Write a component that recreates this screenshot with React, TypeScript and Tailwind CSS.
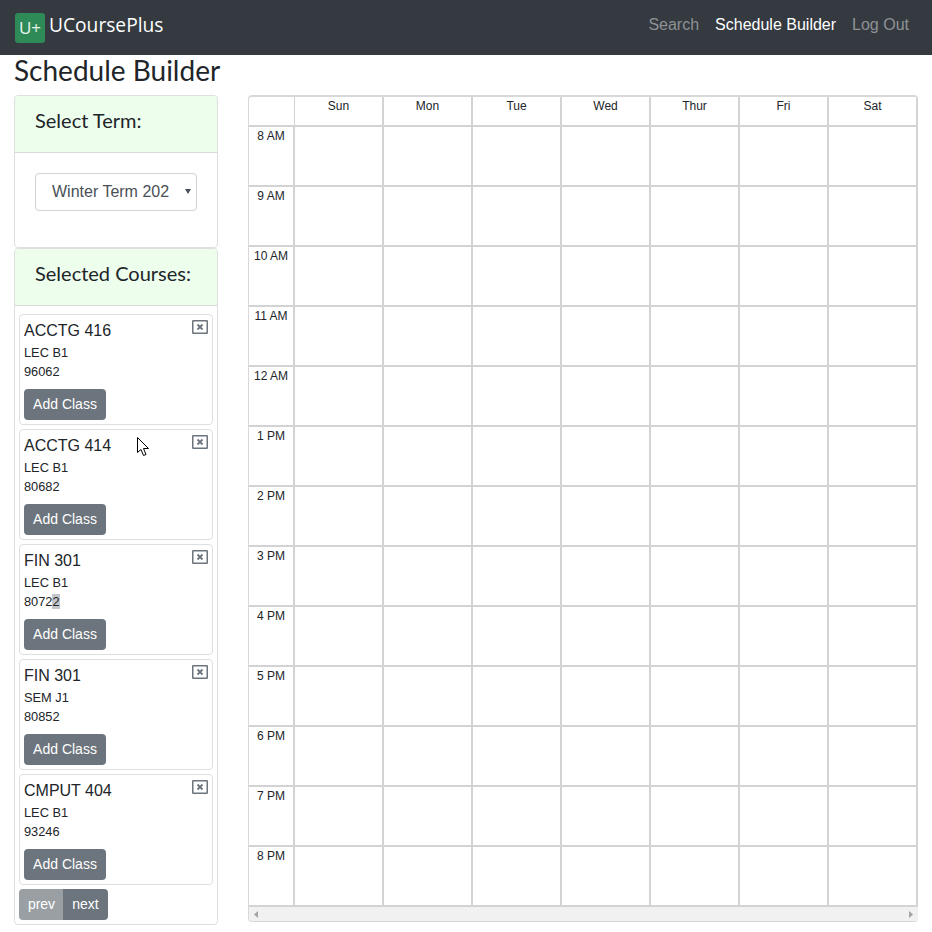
import { Fragment } from 'react'

const courses = [
  { name: 'ACCTG 416', section: 'LEC B1', code: '96062' },
  { name: 'ACCTG 414', section: 'LEC B1', code: '80682' },
  { name: 'FIN 301', section: 'LEC B1', code: '80722' },
  { name: 'FIN 301', section: 'SEM J1', code: '80852' },
  { name: 'CMPUT 404', section: 'LEC B1', code: '93246' },
]

const days = ['Sun', 'Mon', 'Tue', 'Wed', 'Thur', 'Fri', 'Sat']

const hours = [
  '8 AM', '9 AM', '10 AM', '11 AM', '12 AM', '1 PM', '2 PM',
  '3 PM', '4 PM', '5 PM', '6 PM', '7 PM', '8 PM',
]

function CloseIcon() {
  return (
    <svg width="16" height="14" viewBox="0 0 16 14" fill="none" className="block">
      <rect x="0.75" y="0.75" width="14.5" height="12.5" rx="0.5" stroke="#6c757d" strokeWidth="1.5" />
      <path d="M5.5 4.5 L10.5 9.5 M10.5 4.5 L5.5 9.5" stroke="#6c757d" strokeWidth="1.8" />
    </svg>
  )
}

function CourseCard({ name, section, code }: { name: string; section: string; code: string }) {
  // the third card has the last digit of its code selected in the screenshot
  const selected = code === '80722'
  return (
    <div className="relative h-[111px] rounded border border-[#dfdfdf] bg-white pl-[4px] pt-[4px]">
      <button className="absolute right-[4px] top-[5px]">
        <CloseIcon />
      </button>
      <div className="text-[16px] leading-[24px] text-[#212529]">{name}</div>
      <div className="text-[12.8px] leading-[19px] text-[#212529]">{section}</div>
      <div className="text-[12.8px] leading-[19px] text-[#212529]">
        {selected ? (
          <>
            8072<span className="bg-[#c4c7ca]">2</span>
          </>
        ) : (
          code
        )}
      </div>
      <button className="mt-[8px] block h-[31px] w-[82px] rounded bg-[#6c757d] text-[14px] text-white">
        Add Class
      </button>
    </div>
  )
}

function Sidebar() {
  return (
    <aside className="w-[204px] shrink-0">
      <div className="h-[153px] rounded border border-[#dfdfdf] bg-white">
        <div className="h-[57px] rounded-t border-b border-[#d8dcd8] bg-[#edfeed] pl-[20px] pt-[11px] font-['Lato',sans-serif] text-[20px] leading-[26px] text-[#212529]">
          Select Term:
        </div>
        <div className="px-[20px] pt-[20px]">
          <div className="relative h-[38px] w-[162px]">
            <select className="block h-[38px] w-[162px] appearance-none rounded border border-[#ced4da] bg-white pb-px pl-[16px] pr-[27px] text-[16px] text-[#495057]">
              <option>Winter Term 2021</option>
            </select>
            <svg width="6" height="5" viewBox="0 0 6 5" className="pointer-events-none absolute right-[6px] top-[16px]">
              <path d="M0 0 H6 L3 5 Z" fill="#495057" />
            </svg>
          </div>
        </div>
      </div>
      <div className="h-[677px] rounded border border-[#dfdfdf] bg-white">
        <div className="h-[57px] rounded-t border-b border-[#d8dcd8] bg-[#edfeed] pl-[20px] pt-[11px] font-['Lato',sans-serif] text-[20px] leading-[26px] text-[#212529]">
          Selected Courses:
        </div>
        <div className="flex flex-col gap-[4px] px-[4px] pt-[8px]">
          {courses.map((course) => (
            <CourseCard key={course.code} {...course} />
          ))}
          <div className="flex h-[31px] w-[89px] overflow-hidden rounded text-[14px] text-white">
            <button className="w-[44px] bg-[#9a9fa4] pl-px">prev</button>
            <button className="w-[45px] bg-[#6c757d]">next</button>
          </div>
        </div>
      </div>
    </aside>
  )
}

function Calendar() {
  return (
    <div className="h-[827px] w-[670px] shrink-0 overflow-hidden rounded border border-t-2 border-r-0 border-[#d8d8d8] bg-white">
      <div className="grid grid-cols-[46px_repeat(7,89px)] grid-rows-[30px_repeat(12,60px)_58px]">
        <div className="border-b-2 border-r border-[#d3d3d3]" />
        {days.map((day) => (
          <div
            key={day}
            className="border-b-2 border-r-2 border-[#d3d3d3] pt-px text-center text-[12px] leading-[16px] text-[#212529]"
          >
            {day}
          </div>
        ))}
        {hours.map((hour, rowIndex) => (
          <Fragment key={hour}>
            <div
              className={`border-r-2 border-[#d3d3d3] pt-px text-center text-[12px] leading-[16px] text-[#212529] ${
                rowIndex < hours.length - 1 ? 'border-b-2' : ''
              }`}
            >
              {hour}
            </div>
            {days.map((day) => (
              <div
                key={day}
                className={`border-r-2 border-[#d3d3d3] ${rowIndex < hours.length - 1 ? 'border-b-2' : ''}`}
              />
            ))}
          </Fragment>
        ))}
      </div>
      <div className="flex h-[16px] items-center justify-between border-t-2 border-[#d3d3d3] bg-[#f1f1f1] px-[5px]">
        <svg width="4" height="7" viewBox="0 0 4 7">
          <path d="M4 0 V7 L0 3.5 Z" fill="#a3a3a3" />
        </svg>
        <svg width="4" height="7" viewBox="0 0 4 7">
          <path d="M0 0 V7 L4 3.5 Z" fill="#a3a3a3" />
        </svg>
      </div>
    </div>
  )
}

export default function App() {
  return (
    <div className="relative h-[932px] w-[932px] overflow-hidden bg-white font-['Liberation_Sans',sans-serif] text-[#212529]">
      {/* Navbar */}
      <nav className="flex h-[55px] items-center justify-between bg-[#343a40] pl-[15px] pr-[23px]">
        <div className="flex items-center gap-[4px]">
          <div className="flex h-[30px] w-[30px] items-center justify-center rounded-[3px] bg-[#2e8b57] font-['Open_Sans',sans-serif] text-[17px] text-[#e9f5ee]">
            U+
          </div>
          <span className="-mt-[5px] font-['Open_Sans',sans-serif] text-[19.2px] text-white">UCoursePlus</span>
        </div>
        <div className="-mt-[6px] flex gap-[16px] text-[16px]">
          <span className="text-[#8f9295]">Search</span>
          <span className="text-white">Schedule Builder</span>
          <span className="text-[#8f9295]">Log Out</span>
        </div>
      </nav>

      <h1 className="pl-[14px] font-['Lato',sans-serif] text-[28px] leading-[31px] font-normal text-[#212529]">
        Schedule Builder
      </h1>

      <div className="mt-[9px] flex gap-[30px] pl-[14px]">
        <Sidebar />
        <Calendar />
      </div>

      {/* Mouse pointer captured in the screenshot */}
      <svg width="14" height="20" viewBox="0 0 14 20" className="absolute left-[137px] top-[437px]">
        <path d="M0.5 0.5 V15.5 L4 12.5 L6.5 18.5 L9 17.5 L6.5 11.5 H11.5 Z" fill="#fff" stroke="#000" strokeWidth="1" />
      </svg>
    </div>
  )
}
